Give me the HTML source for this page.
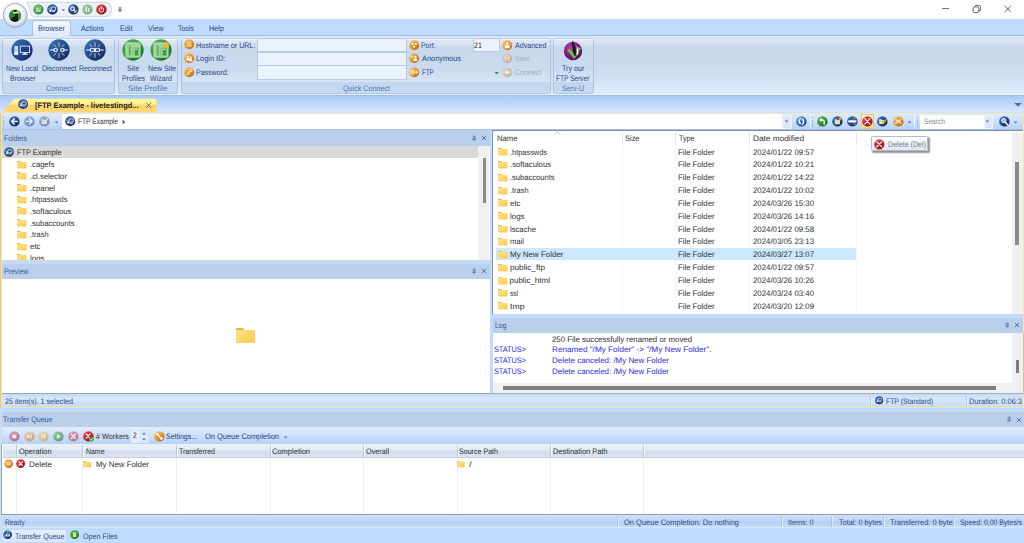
<!DOCTYPE html>
<html><head><meta charset="utf-8"><title>FTP Example</title>
<style>
html,body{margin:0;padding:0;}
body{width:1024px;height:543px;position:relative;overflow:hidden;background:#bfdbff;font-family:"Liberation Sans",sans-serif;}
.t{position:absolute;white-space:nowrap;line-height:12px;height:12px;transform-origin:0 50%;text-rendering:geometricPrecision;}
svg{position:absolute;overflow:visible;}
</style></head><body>
<svg width="0" height="0" style="left:0;top:0"><defs>
<linearGradient id="gB" x1="0.15" y1="0.1" x2="0.85" y2="0.9"><stop offset="0" stop-color="#3470b8"/><stop offset="0.5" stop-color="#214b95"/><stop offset="1" stop-color="#182a68"/></linearGradient>
<linearGradient id="gL" x1="0.15" y1="0.1" x2="0.85" y2="0.9"><stop offset="0" stop-color="#5ba6dc"/><stop offset="0.5" stop-color="#2f6cb8"/><stop offset="1" stop-color="#1d3f8a"/></linearGradient>
<linearGradient id="gG" x1="0.15" y1="0.1" x2="0.85" y2="0.9"><stop offset="0" stop-color="#4fb548"/><stop offset="0.5" stop-color="#2f9633"/><stop offset="1" stop-color="#1a6f25"/></linearGradient>
<linearGradient id="gO" x1="0.15" y1="0.1" x2="0.85" y2="0.9"><stop offset="0" stop-color="#f6bd62"/><stop offset="0.5" stop-color="#e3952c"/><stop offset="1" stop-color="#bd6e16"/></linearGradient>
<linearGradient id="gY" x1="0.15" y1="0.1" x2="0.85" y2="0.9"><stop offset="0" stop-color="#f6d56a"/><stop offset="0.5" stop-color="#e6b236"/><stop offset="1" stop-color="#c08a1a"/></linearGradient>
<linearGradient id="gR" x1="0.15" y1="0.1" x2="0.85" y2="0.9"><stop offset="0" stop-color="#e04a52"/><stop offset="0.5" stop-color="#c2242e"/><stop offset="1" stop-color="#94121c"/></linearGradient>
<radialGradient id="gP" cx="0.4" cy="0.3" r="0.8"><stop offset="0" stop-color="#b23aa8"/><stop offset="0.6" stop-color="#7c1a7c"/><stop offset="1" stop-color="#3d0f45"/></radialGradient>
<radialGradient id="gS" cx="0.45" cy="0.4" r="0.62"><stop offset="0" stop-color="#ffffff"/><stop offset="0.55" stop-color="#f4f6f9"/><stop offset="0.8" stop-color="#dbe1ea"/><stop offset="1" stop-color="#b6c0d2"/></radialGradient>
<linearGradient id="gF" x1="0" y1="0" x2="1" y2="1"><stop offset="0" stop-color="#fde28a"/><stop offset="1" stop-color="#f8c94f"/></linearGradient>
</defs></svg>
<div style="position:absolute;left:0px;top:0px;width:1024px;height:19px;background:#fff;"></div>
<div style="position:absolute;left:0px;top:35px;width:1024px;height:1px;background:#9fc0ea;"></div>
<div style="position:absolute;left:0px;top:36px;width:1024px;height:59px;background:linear-gradient(#dee8f5 0,#d6e2f2 12%,#c9d9ed 16%,#c8d9ee 45%,#d3e3f4 78%,#dff0fb 100%);"></div>
<div style="position:absolute;left:32px;top:20.2px;width:39px;height:15.8px;background:linear-gradient(#f3f8fe,#dfe9f6);border:1px solid #a5c1e6;border-bottom:none;border-radius:3px 3px 0 0;box-sizing:border-box;"></div>
<span class="t" style="left:38.00px;top:23.10px;font-size:8.0px;color:#1e4588;transform:scaleX(0.9202);">Browser</span>
<span class="t" style="left:81.00px;top:23.10px;font-size:8.0px;color:#1e4588;transform:scaleX(0.8767);">Actions</span>
<span class="t" style="left:120.00px;top:23.10px;font-size:8.0px;color:#1e4588;transform:scaleX(0.9068);">Edit</span>
<span class="t" style="left:147.50px;top:23.10px;font-size:8.0px;color:#1e4588;transform:scaleX(0.9014);">View</span>
<span class="t" style="left:178.00px;top:23.10px;font-size:8.0px;color:#1e4588;transform:scaleX(0.8567);">Tools</span>
<span class="t" style="left:209.00px;top:23.10px;font-size:8.0px;color:#1e4588;transform:scaleX(0.9117);">Help</span>
<svg style="left:0;top:0" width="130" height="30" viewBox="0 0 130 30"><path d="M27 2.3H104Q111.5 2.3 111.5 9.6Q111.5 16.8 104 16.8H33.5Q30.8 16.8 30 12Q29 4 26.5 2.3Z" fill="#eef2f8" stroke="#c3cbd8" stroke-width="0.8"/><circle cx="15.2" cy="15.3" r="12" fill="url(#gS)" stroke="#9eaac0" stroke-width="1"/><circle cx="15" cy="15.7" r="6.1" fill="#1f8a35"/><path d="M15 15.7L10.2 19.6A6.1 6.1 0 0 0 18.4 20.8V12.5H15Z" fill="#161616"/><path d="M18.4 12.4V21A6.1 6.1 0 0 0 20.6 13.2Z" fill="#2fa548"/><path d="M12.8 12.2L14.6 11L18.6 11.6L19 13.6H13.4Z" fill="#f3e48c"/><path d="M14 9.9L16.6 10.6V12H14Z" fill="#161616"/><path d="M118.6 7.4H121.4M118.6 8.6H121.4" stroke="#5a78b0" stroke-width="0.7"/><path d="M117.8 9.6H122.2L120 12Z" fill="#3f5f9c"/><path d="M61.4 9.2H65.2L63.3 11.2Z" fill="#5a78b0"/></svg>
<svg style="left:33.40px;top:4.40px" width="10.80" height="10.80" viewBox="-6 -6 12 12" opacity="0.85"><circle r="5.8" fill="url(#gG)"/><rect x="-2.6" y="-3" width="5.2" height="6" rx="0.6" fill="#a9dba6"/><text x="-1.5" y="2.1" font-size="5.4" font-weight="bold" fill="#2a9a30" font-family="Liberation Sans,sans-serif">?</text></svg>
<svg style="left:47.30px;top:4.40px" width="10.80" height="10.80" viewBox="-6 -6 12 12"><circle r="5.8" fill="url(#gB)"/><path d="M-4.8 -0.6H-1.2" stroke="#f4b12c" stroke-width="0.8"/><rect x="-1.4" y="-2.6" width="5" height="3.6" rx="0.4" fill="none" stroke="#fff" stroke-width="0.9"/><path d="M-0.2 2.4H2.6" fill="none" stroke="#fff" stroke-linecap="round" stroke-width="0.9"/><rect x="-3.4" y="0.4" width="2" height="2.2" fill="#fff"/></svg>
<svg style="left:67.90px;top:4.40px" width="10.80" height="10.80" viewBox="-6 -6 12 12"><circle r="5.8" fill="url(#gB)"/><circle cx="-1" cy="-0.8" r="2" fill="none" stroke="#fff" stroke-width="1.2"/><path d="M0.4 0.6L2.4 2.6" fill="none" stroke="#fff" stroke-linecap="round" stroke-width="1.2"/><path d="M0.6 2.6L2 4L4.6 0.6" fill="none" stroke="#f4b12c" stroke-width="1.1"/></svg>
<svg style="left:81.80px;top:4.40px" width="10.80" height="10.80" viewBox="-6 -6 12 12" opacity="0.55"><circle r="5.8" fill="url(#gG)"/><rect x="-2" y="-3" width="1.6" height="6" rx="0.5" fill="#d9f0d6"/><rect x="0.6" y="-1.6" width="1.6" height="4.6" rx="0.5" fill="#d9f0d6"/></svg>
<svg style="left:95.80px;top:4.40px" width="10.80" height="10.80" viewBox="-6 -6 12 12"><circle r="5.8" fill="url(#gR)"/><circle cx="0" cy="0.4" r="2.6" fill="none" stroke="#fff" stroke-width="1"/><path d="M0 -3.4V0" stroke="#c3212c" stroke-width="2"/><path d="M0 -3.4V0" fill="none" stroke="#fff" stroke-linecap="round" stroke-width="0.9"/></svg>
<svg style="left:930px;top:0" width="94" height="19" viewBox="930 0 94 19"><path d="M942 8.6H949" stroke="#444" stroke-width="0.8"/><rect x="973.2" y="6.9" width="5.6" height="5.6" rx="1.2" fill="none" stroke="#444" stroke-width="0.8"/><path d="M975 6.9V6.2Q975 5.4 975.8 5.4H979.4Q980.4 5.4 980.4 6.4V10Q980.4 10.8 979.6 10.8H978.8" fill="none" stroke="#444" stroke-width="0.8"/><path d="M1004.6 5.8L1011 12.2M1011 5.8L1004.6 12.2" stroke="#444" stroke-width="0.8"/></svg>
<div style="position:absolute;left:2px;top:37.5px;width:113px;height:56.0px;box-sizing:border-box;border:1px solid rgba(160,188,226,0.75);border-top-color:rgba(190,208,232,0.6);border-radius:3px;background:linear-gradient(#dfe9f6 0,#d6e2f2 11%,#c9d9ed 15%,#cbdbef 55%,#d5e4f5 79%,#c2d6ef 79.5%,#c7daf2 100%);"></div>
<div style="position:absolute;left:3px;top:38.5px;width:111px;height:0.7999999999999972px;background:rgba(255,255,255,0.5);"></div>
<span class="t" style="left:45.50px;top:82.50px;font-size:8.0px;color:#4f78b4;transform:scaleX(0.9061);">Connect</span>
<div style="position:absolute;left:117.5px;top:37.5px;width:60.5px;height:56.0px;box-sizing:border-box;border:1px solid rgba(160,188,226,0.75);border-top-color:rgba(190,208,232,0.6);border-radius:3px;background:linear-gradient(#dfe9f6 0,#d6e2f2 11%,#c9d9ed 15%,#cbdbef 55%,#d5e4f5 79%,#c2d6ef 79.5%,#c7daf2 100%);"></div>
<div style="position:absolute;left:118.5px;top:38.5px;width:58.5px;height:0.7999999999999972px;background:rgba(255,255,255,0.5);"></div>
<span class="t" style="left:128.00px;top:82.50px;font-size:8.0px;color:#4f78b4;transform:scaleX(1.0211);">Site Profile</span>
<div style="position:absolute;left:180.5px;top:37.5px;width:370.0px;height:56.0px;box-sizing:border-box;border:1px solid rgba(160,188,226,0.75);border-top-color:rgba(190,208,232,0.6);border-radius:3px;background:linear-gradient(#dfe9f6 0,#d6e2f2 11%,#c9d9ed 15%,#cbdbef 55%,#d5e4f5 79%,#c2d6ef 79.5%,#c7daf2 100%);"></div>
<div style="position:absolute;left:181.5px;top:38.5px;width:368.0px;height:0.7999999999999972px;background:rgba(255,255,255,0.5);"></div>
<span class="t" style="left:343.00px;top:82.50px;font-size:8.0px;color:#4f78b4;transform:scaleX(0.8958);">Quick Connect</span>
<div style="position:absolute;left:553px;top:37.5px;width:40.5px;height:56.0px;box-sizing:border-box;border:1px solid rgba(160,188,226,0.75);border-top-color:rgba(190,208,232,0.6);border-radius:3px;background:linear-gradient(#dfe9f6 0,#d6e2f2 11%,#c9d9ed 15%,#cbdbef 55%,#d5e4f5 79%,#c2d6ef 79.5%,#c7daf2 100%);"></div>
<div style="position:absolute;left:554px;top:38.5px;width:38.5px;height:0.7999999999999972px;background:rgba(255,255,255,0.5);"></div>
<span class="t" style="left:562.00px;top:82.50px;font-size:8.0px;color:#4f78b4;transform:scaleX(0.8839);">Serv-U</span>
<svg style="left:10.50px;top:39.00px" width="22.00" height="22.00" viewBox="-6 -6 12 12"><circle r="5.8" fill="url(#gB)"/><rect x="-4.2" y="-2.2" width="2.1" height="4.8" fill="#c9d3e6"/><rect x="-4.2" y="1.2" width="2.1" height="1.4" fill="#fff"/><rect x="-0.9" y="-2.1" width="5" height="3.5" fill="#1c3f86" stroke="#d5dcea" stroke-width="0.55"/><rect x="0.8" y="1.6" width="1.6" height="0.7" fill="#e8ecf4"/><rect x="0.1" y="2.1" width="3" height="0.55" fill="#e8ecf4"/></svg>
<svg style="left:47.50px;top:39.00px" width="22.00" height="22.00" viewBox="-6 -6 12 12"><circle r="5.8" fill="url(#gB)"/><path d="M0 -4.2V-1.6M0 4.2V1.6M-2.9 -3.1L-1.5 -1.5M2.9 -3.1L1.5 -1.5M-2.9 3.1L-1.5 1.5M2.9 3.1L1.5 1.5" stroke="#f4c66b" stroke-width="0.5" fill="none"/><path d="M-4.6 0H-3M4.6 0H3" fill="none" stroke="#fff" stroke-linecap="round" stroke-width="0.5"/><rect x="-3" y="-0.9" width="2.3" height="1.8" rx="0.5" fill="#fff"/><rect x="0.7" y="-0.9" width="2.3" height="1.8" rx="0.5" fill="#fff"/><rect x="-2.3" y="-0.5" width="1" height="1" fill="#1d4b95"/><rect x="1.3" y="-0.5" width="1" height="1" fill="#1d4b95"/></svg>
<svg style="left:84.00px;top:39.00px" width="22.00" height="22.00" viewBox="-6 -6 12 12"><circle r="5.8" fill="url(#gB)"/><path d="M0 -4.2V-1.6M0 4.2V1.6M-2.9 -3.1L-1.5 -1.5M2.9 -3.1L1.5 -1.5M-2.9 3.1L-1.5 1.5M2.9 3.1L1.5 1.5" stroke="#f4c66b" stroke-width="0.5" fill="none"/><path d="M-4.6 0H-3M4.6 0H3" fill="none" stroke="#fff" stroke-linecap="round" stroke-width="0.5"/><rect x="-2.8" y="-0.9" width="5.6" height="1.8" rx="0.5" fill="#fff"/><rect x="-2.2" y="-0.5" width="1.6" height="1" fill="#1d4b95"/><rect x="0.6" y="-0.5" width="1.6" height="1" fill="#1d4b95"/></svg>
<span class="t" style="left:6.00px;top:62.50px;font-size:8.0px;color:#1e4588;transform:scaleX(0.8567);">New Local</span>
<span class="t" style="left:9.50px;top:72.50px;font-size:8.0px;color:#1e4588;transform:scaleX(0.8691);">Browser</span>
<span class="t" style="left:41.50px;top:62.50px;font-size:8.0px;color:#1e4588;transform:scaleX(0.8718);">Disconnect</span>
<span class="t" style="left:79.00px;top:62.50px;font-size:8.0px;color:#1e4588;transform:scaleX(0.8628);">Reconnect</span>
<svg style="left:122.00px;top:39.00px" width="22.00" height="22.00" viewBox="-6 -6 12 12"><circle r="5.8" fill="url(#gG)"/><rect x="-3.9" y="-3.9" width="7.8" height="7.9" rx="0.7" fill="#a3d49f" stroke="#bfe3bb" stroke-width="0.4"/><rect x="-2.3" y="-2.4" width="1.1" height="5.4" fill="#62b25f"/><rect x="-0.5" y="-1.2" width="0.9" height="4.2" fill="#8cc889"/><rect x="1" y="0" width="1.9" height="3" fill="#3f9a40"/><path d="M0.4 -1H3V0" stroke="#5aa858" stroke-width="0.5" fill="none"/></svg>
<svg style="left:150.00px;top:39.00px" width="22.00" height="22.00" viewBox="-6 -6 12 12"><circle r="5.8" fill="url(#gG)"/><rect x="-3.9" y="-3.9" width="7.8" height="7.9" rx="0.7" fill="#a3d49f" stroke="#bfe3bb" stroke-width="0.4"/><rect x="-2.3" y="-2.4" width="1.1" height="5.4" fill="#62b25f"/><rect x="-0.5" y="-1.2" width="0.9" height="4.2" fill="#8cc889"/><rect x="1" y="0" width="1.9" height="3" fill="#3f9a40"/><path d="M0.4 -1H3V0" stroke="#5aa858" stroke-width="0.5" fill="none"/><path d="M2.9 -4.9L3.5 -3.5L5 -3.4L3.9 -2.4L4.2 -0.9L2.9 -1.7L1.6 -0.9L1.9 -2.4L0.8 -3.4L2.3 -3.5Z" fill="#f7b52c"/></svg>
<span class="t" style="left:127.00px;top:62.50px;font-size:8.0px;color:#1e4588;transform:scaleX(0.8705);">Site</span>
<span class="t" style="left:121.50px;top:72.50px;font-size:8.0px;color:#1e4588;transform:scaleX(0.8622);">Profiles</span>
<span class="t" style="left:147.50px;top:62.50px;font-size:8.0px;color:#1e4588;transform:scaleX(0.8747);">New Site</span>
<span class="t" style="left:150.00px;top:72.50px;font-size:8.0px;color:#1e4588;transform:scaleX(0.8839);">Wizard</span>
<svg style="left:183.60px;top:39.30px" width="10.40" height="10.40" viewBox="-6 -6 12 12"><circle r="5.8" fill="url(#gO)"/><rect x="-2.6" y="-3" width="5.2" height="6" rx="0.5" fill="#fbe2b4"/><path d="M-0.9 -3V3M0.9 -3V3M-2.6 -1H2.6M-2.6 1H2.6" stroke="#e3932a" stroke-width="0.5"/></svg>
<svg style="left:183.60px;top:53.20px" width="10.40" height="10.40" viewBox="-6 -6 12 12"><circle r="5.8" fill="url(#gO)"/><circle cx="-1.4" cy="-1.7" r="1.2" fill="#fff"/><path d="M-3.6 2.4Q-3.6 -0.2 -1.4 -0.2Q0.2 -0.2 0.6 1.2V2.4Z" fill="#fff"/><circle cx="1.8" cy="-0.6" r="1.3" fill="#fff"/><path d="M-0.6 3.4Q-0.6 0.9 1.8 0.9Q4 0.9 4 3.4Z" fill="#fff"/></svg>
<svg style="left:183.60px;top:67.20px" width="10.40" height="10.40" viewBox="-6 -6 12 12"><circle r="5.8" fill="url(#gO)"/><path d="M-2.8 3L1 -1" fill="none" stroke="#fff" stroke-linecap="round" stroke-width="1.1"/><circle cx="2" cy="-2" r="1.5" fill="none" stroke="#fff" stroke-width="1"/><path d="M-2 2.2L-1 3.2M-0.9 1.1L0 2" fill="none" stroke="#fff" stroke-linecap="round" stroke-width="0.7"/></svg>
<span class="t" style="left:195.50px;top:39.50px;font-size:8.0px;color:#1e4588;transform:scaleX(0.8982);">Hostname or URL:</span>
<span class="t" style="left:195.50px;top:53.30px;font-size:8.0px;color:#1e4588;transform:scaleX(0.9213);">Login ID:</span>
<span class="t" style="left:195.50px;top:67.10px;font-size:8.0px;color:#1e4588;transform:scaleX(0.8702);">Password:</span>
<div style="position:absolute;left:257.3px;top:38px;width:149.7px;height:14.399999999999999px;box-sizing:border-box;background:#eaf2fb;border:1px solid #b6cae6;"></div>
<div style="position:absolute;left:257.3px;top:51.7px;width:149.7px;height:14.400000000000006px;box-sizing:border-box;background:#eaf2fb;border:1px solid #b6cae6;"></div>
<div style="position:absolute;left:257.3px;top:65.4px;width:149.7px;height:14.400000000000006px;box-sizing:border-box;background:#eaf2fb;border:1px solid #b6cae6;"></div>
<svg style="left:408.50px;top:39.50px" width="10.40" height="10.40" viewBox="-6 -6 12 12"><circle r="5.8" fill="url(#gO)"/><rect x="-3" y="-2.6" width="2.2" height="2.2" rx="0.4" fill="#fff"/><rect x="0.8" y="-2.6" width="2.2" height="2.2" rx="0.4" fill="#fff"/><rect x="-1.1" y="0.6" width="2.2" height="2.2" rx="0.4" fill="#fff"/></svg>
<svg style="left:408.50px;top:53.30px" width="10.40" height="10.40" viewBox="-6 -6 12 12"><circle r="5.8" fill="url(#gO)"/><text x="-4.2" y="0.6" font-size="4.6" font-weight="bold" fill="#fff" font-family="Liberation Sans,sans-serif">?</text><circle cx="1.3" cy="-1.2" r="1.4" fill="#fff"/><path d="M-1.2 3.2Q-1.2 0.4 1.3 0.4Q3.8 0.4 3.8 3.2Z" fill="#fff"/></svg>
<svg style="left:408.50px;top:67.20px" width="10.40" height="10.40" viewBox="-6 -6 12 12"><circle r="5.8" fill="url(#gO)"/><rect x="-4" y="-2.2" width="4" height="4.4" rx="0.5" fill="none" stroke="#fff" stroke-width="0.9"/><rect x="-2.8" y="-1" width="1.6" height="2" fill="#fff"/><path d="M1 0H4M2.6 -1.6L4.2 0L2.6 1.6" fill="none" stroke="#fff" stroke-linecap="round" stroke-width="1"/></svg>
<span class="t" style="left:420.50px;top:39.50px;font-size:8.0px;color:#1e4588;transform:scaleX(0.8583);">Port:</span>
<span class="t" style="left:421.50px;top:53.30px;font-size:8.0px;color:#1e4588;transform:scaleX(0.9232);">Anonymous</span>
<span class="t" style="left:421.50px;top:67.10px;font-size:8.0px;color:#1e4588;transform:scaleX(0.7611);">FTP</span>
<div style="position:absolute;left:472.5px;top:38px;width:27.5px;height:13.799999999999997px;box-sizing:border-box;background:#eaf2fb;border:1px solid #b6cae6;"></div>
<span class="t" style="left:474.20px;top:39.70px;font-size:8.0px;color:#2e2e2e;transform:scaleX(0.8766);">21</span>
<svg style="left:494px;top:70.6px" width="6" height="5" viewBox="0 0 6 5"><path d="M0.6 1H4.8L2.7 3.4Z" fill="#4a6ea8"/></svg>
<svg style="left:502.40px;top:39.50px" width="10.40" height="10.40" viewBox="-6 -6 12 12"><circle r="5.8" fill="url(#gO)"/><circle cx="0" cy="-1.9" r="1.5" fill="#fff"/><path d="M-3 3.4Q-3 0.2 0 0.2Q3 0.2 3 3.4Z" fill="#fff"/><path d="M-4.4 0H4.4" stroke="#fff" stroke-width="0.7"/></svg>
<svg style="left:502.40px;top:53.30px" width="10.40" height="10.40" viewBox="-6 -6 12 12" opacity="0.4"><circle r="5.8" fill="url(#gO)"/><rect x="-2.8" y="-2.8" width="5.6" height="5.6" rx="0.5" fill="#fff"/><rect x="-1.6" y="-2.8" width="3.2" height="2" fill="#e3932a"/><rect x="-1.8" y="0.4" width="3.6" height="2.4" fill="#e3932a"/></svg>
<svg style="left:502.40px;top:67.20px" width="10.40" height="10.40" viewBox="-6 -6 12 12" opacity="0.4"><circle r="5.8" fill="url(#gO)"/><path d="M-4.6 0H4.6" fill="none" stroke="#fff" stroke-linecap="round" stroke-width="0.8"/><rect x="-2.6" y="-1.4" width="5.2" height="2.8" rx="0.6" fill="#fff"/><path d="M0 -3.8V3.8" stroke="#fff" stroke-width="0.6"/></svg>
<span class="t" style="left:515.00px;top:39.50px;font-size:8.0px;color:#1e4588;transform:scaleX(0.8853);">Advanced</span>
<span class="t" style="left:515.00px;top:53.30px;font-size:8.0px;color:#a3adbc;transform:scaleX(0.8226);">Save</span>
<span class="t" style="left:515.00px;top:67.10px;font-size:8.0px;color:#a3adbc;transform:scaleX(0.8894);">Connect</span>
<svg style="left:563px;top:38.5px" width="20" height="24" viewBox="-10 -12 20 24"><circle cx="0" cy="0" r="9.2" fill="url(#gP)"/><path d="M-4.6 -1.6L1.2 5.6L6.4 -3.6" fill="none" stroke="#6cc04a" stroke-width="3.1" stroke-linejoin="miter"/><path d="M-0.6 -10.6Q3.2 -5 3.4 3.4L1.4 5.4Q0 -1 -1.2 -7.2Z" fill="#1c1a16"/><path d="M3.4 -5.6Q6 -1 5.4 3L3.6 4.6Q4.4 0 3.4 -5.6Z" fill="#fff"/></svg>
<span class="t" style="left:562.00px;top:62.50px;font-size:8.0px;color:#1e4588;transform:scaleX(0.8986);">Try our</span>
<span class="t" style="left:556.00px;top:72.50px;font-size:8.0px;color:#1e4588;transform:scaleX(0.8221);">FTP Server</span>
<div style="position:absolute;left:0px;top:112.5px;width:1024px;height:17.5px;background:linear-gradient(#dfeafb 0,#cfe0f9 45%,#b9d3f6 92%,#9db7dd 100%);"></div>
<div style="position:absolute;left:0px;top:112px;width:1024px;height:296px;box-sizing:border-box;border:1.4px solid #f2e4a0;border-left:2px solid #f2e6a6;border-right:0.9px solid #f3eaa8;border-top-color:#e9ecc8;pointer-events:none;"></div>
<div style="position:absolute;left:0px;top:112px;width:0.9px;height:296px;background:#dccb94;"></div>
<div style="position:absolute;left:0px;top:95px;width:1024px;height:17.5px;background:linear-gradient(#a2bde2 0,#a2bde2 4%,#adccf8 9%,#bfd7fa 50%,#dce9fd 100%);"></div>
<svg style="left:0;top:95px" width="160" height="18" viewBox="0 95 160 18"><defs><linearGradient id="gT" x1="0" y1="0" x2="0" y2="1"><stop offset="0" stop-color="#fffb94"/><stop offset="0.40" stop-color="#fff08a"/><stop offset="0.46" stop-color="#ffd06a"/><stop offset="1" stop-color="#ffd874"/></linearGradient></defs><path d="M2 112.6L13.2 100Q14.2 98.8 16 98.8H154Q156.5 98.8 156.5 101V112.6Z" fill="url(#gT)"/><path d="M146.2 102.7L151.2 107.9M151.2 102.7L146.2 107.9" stroke="#56668a" stroke-width="0.9"/></svg>
<div style="position:absolute;left:156.5px;top:112.2px;width:867.5px;height:1.0px;background:#dfe2c6;"></div>
<svg style="left:17.60px;top:99.40px" width="10.20" height="10.20" viewBox="-6 -6 12 12"><circle r="5.8" fill="url(#gB)"/><path d="M-4.8 -0.6H-1.2" stroke="#f4b12c" stroke-width="0.8"/><rect x="-1.4" y="-2.6" width="5" height="3.6" rx="0.4" fill="none" stroke="#fff" stroke-width="0.9"/><path d="M-0.2 2.4H2.6" fill="none" stroke="#fff" stroke-linecap="round" stroke-width="0.9"/><rect x="-3.4" y="0.4" width="2" height="2.2" fill="#fff"/></svg>
<span class="t" style="left:34.50px;top:99.70px;font-size:8.0px;color:#1a1a1a;transform:scaleX(0.9325);font-weight:bold;">[FTP Example - livetestingd...</span>
<svg style="left:1013px;top:102px" width="10" height="6" viewBox="0 0 10 6"><path d="M1.2 1H8.8L5 4.8Z" fill="#4a6ea8"/></svg>
<div style="position:absolute;left:62px;top:113.6px;width:720px;height:15.099999999999994px;background:#fff;"></div>
<div style="position:absolute;left:782px;top:114.5px;width:9.5px;height:14.5px;box-sizing:border-box;background:#dbe8fa;border:1px solid #eef4fd;"></div>
<svg style="left:9.10px;top:116.10px" width="10.80" height="10.80" viewBox="-6 -6 12 12"><circle r="5.8" fill="url(#gB)"/><path d="M3.4 0H-2.6M-0.2 -2.8L-3 0L-0.2 2.8" fill="none" stroke="#fff" stroke-linecap="round" stroke-width="1.6" stroke-linejoin="round"/></svg>
<svg style="left:23.60px;top:116.10px" width="10.80" height="10.80" viewBox="-6 -6 12 12" opacity="0.45"><circle r="5.8" fill="url(#gB)"/><path d="M-3.4 0H2.6M0.2 -2.8L3 0L0.2 2.8" fill="none" stroke="#fff" stroke-linecap="round" stroke-width="1.6" stroke-linejoin="round"/></svg>
<svg style="left:38.60px;top:116.10px" width="10.80" height="10.80" viewBox="-6 -6 12 12" opacity="0.45"><circle r="5.8" fill="url(#gB)"/><path d="M-3 -2.4H-0.6L0 -1.6H2.8V3.2H-3Z" fill="#e8e0c0"/><path d="M-1 -1.6V3.2" stroke="#d9b85a" stroke-width="0.5"/><path d="M2.9 -4.9L3.5 -3.5L5 -3.4L3.9 -2.4L4.2 -0.9L2.9 -1.7L1.6 -0.9L1.9 -2.4L0.8 -3.4L2.3 -3.5Z" fill="#f7b52c"/></svg>
<svg style="left:53.8px;top:120.5px" width="5" height="3" viewBox="0 0 5 3"><path d="M0.6 0.5H4.4L2.5 2.5Z" fill="#5878b4"/></svg>
<div style="position:absolute;left:2.5px;top:117.0px;width:0.7999999999999998px;height:0.7999999999999972px;background:#7d9cd0;"></div>
<div style="position:absolute;left:2.5px;top:119.7px;width:0.7999999999999998px;height:0.7999999999999972px;background:#7d9cd0;"></div>
<div style="position:absolute;left:2.5px;top:122.4px;width:0.7999999999999998px;height:0.7999999999999972px;background:#7d9cd0;"></div>
<div style="position:absolute;left:2.5px;top:125.1px;width:0.7999999999999998px;height:0.7999999999999972px;background:#7d9cd0;"></div>
<svg style="left:64.80px;top:116.00px" width="10.40" height="10.40" viewBox="-6 -6 12 12"><circle r="5.8" fill="url(#gB)"/><path d="M-4.8 -0.6H-1.2" stroke="#f4b12c" stroke-width="0.8"/><rect x="-1.4" y="-2.6" width="5" height="3.6" rx="0.4" fill="none" stroke="#fff" stroke-width="0.9"/><path d="M-0.2 2.4H2.6" fill="none" stroke="#fff" stroke-linecap="round" stroke-width="0.9"/><rect x="-3.4" y="0.4" width="2" height="2.2" fill="#fff"/></svg>
<span class="t" style="left:77.50px;top:116.10px;font-size:8.0px;color:#2e2e2e;transform:scaleX(0.8279);">FTP Example</span>
<svg style="left:121.5px;top:119px" width="4" height="6" viewBox="0 0 4 6"><path d="M0.6 0.6L3.2 3L0.6 5.4Z" fill="#3d5c9c"/></svg>
<svg style="left:784.2px;top:120.0px" width="5" height="3" viewBox="0 0 5 3"><path d="M0.6 0.5H4.4L2.5 2.5Z" fill="#5878b4"/></svg>
<svg style="left:796.40px;top:116.10px" width="10.80" height="10.80" viewBox="-6 -6 12 12"><circle r="5.8" fill="url(#gL)"/><path d="M-0.8 -3.4Q-3.4 -1.4 -1.8 2.2" fill="none" stroke="#fff" stroke-linecap="round" stroke-width="1.5"/><path d="M-3.2 1L-1.5 3.4L-0.2 1.2Z" fill="#fff"/><path d="M0.8 3.4Q3.4 1.4 1.8 -2.2" fill="none" stroke="#fff" stroke-linecap="round" stroke-width="1.5"/><path d="M3.2 -1L1.5 -3.4L0.2 -1.2Z" fill="#fff"/></svg>
<div style="position:absolute;left:809.5px;top:114px;width:1.0px;height:15px;background:rgba(255,255,255,0.55);"></div>
<div style="position:absolute;left:812.3px;top:117.0px;width:0.7999999999999545px;height:0.7999999999999972px;background:#7d9cd0;"></div>
<div style="position:absolute;left:812.3px;top:119.7px;width:0.7999999999999545px;height:0.7999999999999972px;background:#7d9cd0;"></div>
<div style="position:absolute;left:812.3px;top:122.4px;width:0.7999999999999545px;height:0.7999999999999972px;background:#7d9cd0;"></div>
<div style="position:absolute;left:812.3px;top:125.1px;width:0.7999999999999545px;height:0.7999999999999972px;background:#7d9cd0;"></div>
<svg style="left:817.20px;top:116.10px" width="10.80" height="10.80" viewBox="-6 -6 12 12"><circle r="5.8" fill="url(#gG)"/><path d="M2 3.2V0.2Q2 -1.6 0 -1.6H-1.4" fill="none" stroke="#fff" stroke-linecap="round" stroke-width="1.6"/><path d="M-0.8 -4L-3.6 -1.6L-0.8 0.8Z" fill="#fff"/></svg>
<svg style="left:832.20px;top:116.10px" width="10.80" height="10.80" viewBox="-6 -6 12 12"><circle r="5.8" fill="url(#gB)"/><path d="M-3 -2.4H-0.6L0 -1.6H2.8V3.2H-3Z" fill="#f6e3a4"/><path d="M-1 -1.6V3.2" stroke="#d9b85a" stroke-width="0.5"/><path d="M2.9 -4.9L3.5 -3.5L5 -3.4L3.9 -2.4L4.2 -0.9L2.9 -1.7L1.6 -0.9L1.9 -2.4L0.8 -3.4L2.3 -3.5Z" fill="#f7b52c"/></svg>
<svg style="left:846.90px;top:116.10px" width="10.80" height="10.80" viewBox="-6 -6 12 12"><circle r="5.8" fill="url(#gB)"/><rect x="-4.6" y="-1.3" width="9.2" height="2.6" rx="0.5" fill="#fff"/><path d="M0.6 -3.6Q1.8 -3.6 2.2 -2.8Q2.6 -3.6 3.8 -3.6M0.6 3.6Q1.8 3.6 2.2 2.8Q2.6 3.6 3.8 3.6M2.2 -2.8V2.8" stroke="#f2c94c" stroke-width="0.7" fill="none"/></svg>
<div style="position:absolute;left:860.7px;top:114.3px;width:13.599999999999909px;height:14.399999999999991px;box-sizing:border-box;background:linear-gradient(#fff1c0,#ffdc7e);border:0.8px solid #d9c88e;"></div>
<svg style="left:862.10px;top:116.20px" width="10.80" height="10.80" viewBox="-6 -6 12 12"><circle r="5.8" fill="url(#gR)"/><path d="M-2.9 -3L2.9 3M2.9 -3L-2.9 3" fill="none" stroke="#fff" stroke-linecap="round" stroke-width="1.15"/></svg>
<svg style="left:877.10px;top:116.10px" width="10.80" height="10.80" viewBox="-6 -6 12 12"><circle r="5.8" fill="url(#gB)"/><path d="M-3.6 -2.4H-1.2L-0.6 -1.6H1.6V3H-3.6Z" fill="#f6e3a4"/><path d="M-0.2 0.4L1.2 2L4 -2" fill="none" stroke="#f4b12c" stroke-width="1.3" stroke-linecap="round"/></svg>
<svg style="left:893.30px;top:116.30px" width="10.80" height="10.80" viewBox="-6 -6 12 12"><circle r="5.8" fill="url(#gO)"/><path d="M-3.4 -2.4L3.4 2.4M3.4 -2.4L-3.4 2.4" fill="none" stroke="#fff" stroke-linecap="round" stroke-width="1"/><rect x="-2.2" y="-1.3" width="4.4" height="2.6" rx="0.6" fill="#fbe2b4"/></svg>
<svg style="left:907.0px;top:120.5px" width="5" height="3" viewBox="0 0 5 3"><path d="M0.6 0.5H4.4L2.5 2.5Z" fill="#5878b4"/></svg>
<div style="position:absolute;left:914px;top:114px;width:1px;height:15px;background:rgba(255,255,255,0.55);"></div>
<div style="position:absolute;left:916.5px;top:117.0px;width:0.7999999999999545px;height:0.7999999999999972px;background:#7d9cd0;"></div>
<div style="position:absolute;left:916.5px;top:119.7px;width:0.7999999999999545px;height:0.7999999999999972px;background:#7d9cd0;"></div>
<div style="position:absolute;left:916.5px;top:122.4px;width:0.7999999999999545px;height:0.7999999999999972px;background:#7d9cd0;"></div>
<div style="position:absolute;left:916.5px;top:125.1px;width:0.7999999999999545px;height:0.7999999999999972px;background:#7d9cd0;"></div>
<div style="position:absolute;left:920px;top:115px;width:63.5px;height:13.5px;background:#fff;"></div>
<div style="position:absolute;left:983.5px;top:115px;width:9.0px;height:13.5px;box-sizing:border-box;background:#dbe8fa;border:1px solid #eef4fd;"></div>
<span class="t" style="left:923.50px;top:116.10px;font-size:8.0px;color:#8a8a8a;transform:scaleX(0.8285);">Search</span>
<svg style="left:985.3px;top:120.0px" width="5" height="3" viewBox="0 0 5 3"><path d="M0.6 0.5H4.4L2.5 2.5Z" fill="#5878b4"/></svg>
<svg style="left:998.60px;top:116.10px" width="10.80" height="10.80" viewBox="-6 -6 12 12"><circle r="5.8" fill="url(#gB)"/><circle cx="-0.8" cy="-1" r="2.3" fill="#7fc4e8" stroke="#fff" stroke-width="1"/><path d="M1 1L3.6 3.8" fill="none" stroke="#fff" stroke-linecap="round" stroke-width="1.5"/></svg>
<svg style="left:1013.0px;top:120.5px" width="5" height="3" viewBox="0 0 5 3"><path d="M0.6 0.5H4.4L2.5 2.5Z" fill="#5878b4"/></svg>
<div style="position:absolute;left:2px;top:130px;width:487.5px;height:15.699999999999989px;background:#b9cfea;"></div>
<span class="t" style="left:4.00px;top:132.55px;font-size:8.0px;color:#2f5aa0;transform:scaleX(0.8622);">Folders</span>
<svg style="left:471px;top:134.65px" width="6" height="7" viewBox="-3 -3.5 6 7"><path d="M-0.9 -2.5H1.1V0.8H-0.9ZM-1.8 0.9H2M0.1 1V3" fill="none" stroke="#4a70b0" stroke-width="0.55"/><path d="M0.7 -2.5V0.8" stroke="#4a70b0" stroke-width="0.7"/></svg>
<svg style="left:481.3px;top:135.15px" width="6" height="6" viewBox="-3 -3 6 6"><path d="M-2.2 -2.2L2.2 2.2M2.2 -2.2L-2.2 2.2" stroke="#3d66a8" stroke-width="0.8"/></svg>
<div style="position:absolute;left:2px;top:145.7px;width:487.5px;height:115.0px;background:#fff;border-bottom:1px solid #d9d9d9;box-sizing:border-box;overflow:hidden;"></div>
<div style="position:absolute;left:2px;top:146px;width:476.3px;height:11.599999999999994px;background:#d9d9d9;"></div>
<div style="position:absolute;left:478.3px;top:146px;width:11.199999999999989px;height:114.19999999999999px;background:#f0f0f0;"></div>
<div style="position:absolute;left:482.6px;top:157.6px;width:3.1999999999999886px;height:45.400000000000006px;background:#8b8b8b;"></div>
<svg style="left:4.00px;top:147.00px" width="10.00" height="10.00" viewBox="-6 -6 12 12"><circle r="5.8" fill="url(#gB)"/><path d="M-4.8 -0.6H-1.2" stroke="#f4b12c" stroke-width="0.8"/><rect x="-1.4" y="-2.6" width="5" height="3.6" rx="0.4" fill="none" stroke="#fff" stroke-width="0.9"/><path d="M-0.2 2.4H2.6" fill="none" stroke="#fff" stroke-linecap="round" stroke-width="0.9"/><rect x="-3.4" y="0.4" width="2" height="2.2" fill="#fff"/></svg>
<span class="t" style="left:17.00px;top:147.10px;font-size:8.0px;color:#2e2e2e;transform:scaleX(0.9211);">FTP Example</span>
<svg style="left:16.50px;top:160.60px" width="9.50" height="7.60" viewBox="0 0 20 16" preserveAspectRatio="none"><path d="M0 1.2Q0 0 1.2 0H7L9 2.4H0Z" fill="#f2b52c"/><path d="M0 2.2H19Q20 2.2 20 3.2V15Q20 16 19 16H1Q0 16 0 15Z" fill="url(#gF)"/></svg>
<span class="t" style="left:29.50px;top:159.10px;font-size:8.0px;color:#2e2e2e;transform:scaleX(0.9499);">.cagefs</span>
<svg style="left:16.50px;top:172.32px" width="9.50" height="7.60" viewBox="0 0 20 16" preserveAspectRatio="none"><path d="M0 1.2Q0 0 1.2 0H7L9 2.4H0Z" fill="#f2b52c"/><path d="M0 2.2H19Q20 2.2 20 3.2V15Q20 16 19 16H1Q0 16 0 15Z" fill="url(#gF)"/></svg>
<span class="t" style="left:29.50px;top:170.82px;font-size:8.0px;color:#2e2e2e;transform:scaleX(0.9677);">.cl.selector</span>
<svg style="left:16.50px;top:184.04px" width="9.50" height="7.60" viewBox="0 0 20 16" preserveAspectRatio="none"><path d="M0 1.2Q0 0 1.2 0H7L9 2.4H0Z" fill="#f2b52c"/><path d="M0 2.2H19Q20 2.2 20 3.2V15Q20 16 19 16H1Q0 16 0 15Z" fill="url(#gF)"/></svg>
<span class="t" style="left:29.50px;top:182.54px;font-size:8.0px;color:#2e2e2e;transform:scaleX(0.9691);">.cpanel</span>
<svg style="left:16.50px;top:195.76px" width="9.50" height="7.60" viewBox="0 0 20 16" preserveAspectRatio="none"><path d="M0 1.2Q0 0 1.2 0H7L9 2.4H0Z" fill="#f2b52c"/><path d="M0 2.2H19Q20 2.2 20 3.2V15Q20 16 19 16H1Q0 16 0 15Z" fill="url(#gF)"/></svg>
<span class="t" style="left:29.50px;top:194.26px;font-size:8.0px;color:#2e2e2e;transform:scaleX(0.9370);">.htpasswds</span>
<svg style="left:16.50px;top:207.48px" width="9.50" height="7.60" viewBox="0 0 20 16" preserveAspectRatio="none"><path d="M0 1.2Q0 0 1.2 0H7L9 2.4H0Z" fill="#f2b52c"/><path d="M0 2.2H19Q20 2.2 20 3.2V15Q20 16 19 16H1Q0 16 0 15Z" fill="url(#gF)"/></svg>
<span class="t" style="left:29.50px;top:205.98px;font-size:8.0px;color:#2e2e2e;transform:scaleX(0.9721);">.softaculous</span>
<svg style="left:16.50px;top:219.20px" width="9.50" height="7.60" viewBox="0 0 20 16" preserveAspectRatio="none"><path d="M0 1.2Q0 0 1.2 0H7L9 2.4H0Z" fill="#f2b52c"/><path d="M0 2.2H19Q20 2.2 20 3.2V15Q20 16 19 16H1Q0 16 0 15Z" fill="url(#gF)"/></svg>
<span class="t" style="left:29.50px;top:217.70px;font-size:8.0px;color:#2e2e2e;transform:scaleX(0.9440);">.subaccounts</span>
<svg style="left:16.50px;top:230.92px" width="9.50" height="7.60" viewBox="0 0 20 16" preserveAspectRatio="none"><path d="M0 1.2Q0 0 1.2 0H7L9 2.4H0Z" fill="#f2b52c"/><path d="M0 2.2H19Q20 2.2 20 3.2V15Q20 16 19 16H1Q0 16 0 15Z" fill="url(#gF)"/></svg>
<span class="t" style="left:29.50px;top:229.42px;font-size:8.0px;color:#2e2e2e;transform:scaleX(0.9246);">.trash</span>
<svg style="left:16.50px;top:242.64px" width="9.50" height="7.60" viewBox="0 0 20 16" preserveAspectRatio="none"><path d="M0 1.2Q0 0 1.2 0H7L9 2.4H0Z" fill="#f2b52c"/><path d="M0 2.2H19Q20 2.2 20 3.2V15Q20 16 19 16H1Q0 16 0 15Z" fill="url(#gF)"/></svg>
<span class="t" style="left:29.50px;top:241.14px;font-size:8.0px;color:#2e2e2e;transform:scaleX(0.9839);">etc</span>
<div style="position:absolute;left:2px;top:253.16000000000003px;width:476px;height:7.04px;overflow:hidden;">

<svg style="left:14.50px;top:1.20px" width="9.50" height="7.60" viewBox="0 0 20 16" preserveAspectRatio="none"><path d="M0 1.2Q0 0 1.2 0H7L9 2.4H0Z" fill="#f2b52c"/><path d="M0 2.2H19Q20 2.2 20 3.2V15Q20 16 19 16H1Q0 16 0 15Z" fill="url(#gF)"/></svg>
<span class="t" style="left:27.50px;top:-0.30px;font-size:8.0px;color:#2e2e2e;transform:scaleX(0.9880);">logs</span>
</div>
<div style="position:absolute;left:2px;top:263.5px;width:487.5px;height:15.100000000000023px;background:#b9cfea;"></div>
<span class="t" style="left:4.00px;top:265.75px;font-size:8.0px;color:#2f5aa0;transform:scaleX(0.8611);">Preview</span>
<svg style="left:471px;top:267.85px" width="6" height="7" viewBox="-3 -3.5 6 7"><path d="M-0.9 -2.5H1.1V0.8H-0.9ZM-1.8 0.9H2M0.1 1V3" fill="none" stroke="#4a70b0" stroke-width="0.55"/><path d="M0.7 -2.5V0.8" stroke="#4a70b0" stroke-width="0.7"/></svg>
<svg style="left:481.3px;top:268.35px" width="6" height="6" viewBox="-3 -3 6 6"><path d="M-2.2 -2.2L2.2 2.2M2.2 -2.2L-2.2 2.2" stroke="#3d66a8" stroke-width="0.8"/></svg>
<div style="position:absolute;left:2px;top:278.6px;width:487.5px;height:114.59999999999997px;background:#fff;"></div>
<div style="position:absolute;left:2px;top:393.2px;width:487.5px;height:1.1000000000000227px;background:#9aa7b8;"></div>
<svg style="left:236.00px;top:328.00px" width="19.00" height="15.00" viewBox="0 0 20 16" preserveAspectRatio="none"><path d="M0 1.2Q0 0 1.2 0H7L9 2.4H0Z" fill="#f2b52c"/><path d="M0 2.2H19Q20 2.2 20 3.2V15Q20 16 19 16H1Q0 16 0 15Z" fill="url(#gF)"/></svg>
<div style="position:absolute;left:2px;top:394.3px;width:1021.1px;height:12.699999999999989px;background:linear-gradient(#c3d9f6,#d7e6fb 35%,#c9ddf8);"></div>
<span class="t" style="left:5.00px;top:396.40px;font-size:8.0px;color:#2a4a82;transform:scaleX(0.8895);">25 item(s). 1 selected.</span>
<div style="position:absolute;left:489.5px;top:393.2px;width:533.6px;height:1.1000000000000227px;background:#a3b0c2;"></div>
<div style="position:absolute;left:870px;top:395.5px;width:1px;height:11.0px;background:#b4cbea;"></div>
<div style="position:absolute;left:871px;top:395.5px;width:1px;height:11.0px;background:#e4eefb;"></div>
<div style="position:absolute;left:966px;top:395.5px;width:1px;height:11.0px;background:#b4cbea;"></div>
<div style="position:absolute;left:967px;top:395.5px;width:1px;height:11.0px;background:#e4eefb;"></div>
<svg style="left:874.80px;top:396.40px" width="8.40" height="8.40" viewBox="-6 -6 12 12"><circle r="5.8" fill="url(#gB)"/><path d="M-4.8 -0.6H-1.2" stroke="#f4b12c" stroke-width="0.8"/><rect x="-1.4" y="-2.6" width="5" height="3.6" rx="0.4" fill="none" stroke="#fff" stroke-width="0.9"/><path d="M-0.2 2.4H2.6" fill="none" stroke="#fff" stroke-linecap="round" stroke-width="0.9"/><rect x="-3.4" y="0.4" width="2" height="2.2" fill="#fff"/></svg>
<span class="t" style="left:886.00px;top:396.10px;font-size:8.0px;color:#2a4a82;transform:scaleX(0.8548);">FTP (Standard)</span>
<span class="t" style="left:969.00px;top:396.10px;font-size:8.0px;color:#2a4a82;transform:scaleX(0.9310);">Duration: 0:06:3</span>
<div style="position:absolute;left:492px;top:129.8px;width:531.1px;height:184.8px;background:#fff;border-left:1px solid #7f93ad;border-top:1px solid #788eac;border-bottom:1px solid #cfd8e4;box-sizing:border-box;"></div>
<div style="position:absolute;left:621.5px;top:131.5px;width:1.0px;height:13.5px;background:#e3e7ee;"></div>
<div style="position:absolute;left:621.5px;top:145px;width:1.0px;height:169px;background:#f3f5f9;"></div>
<div style="position:absolute;left:674.5px;top:131.5px;width:1.0px;height:13.5px;background:#e3e7ee;"></div>
<div style="position:absolute;left:674.5px;top:145px;width:1.0px;height:169px;background:#f3f5f9;"></div>
<div style="position:absolute;left:749px;top:131.5px;width:1px;height:13.5px;background:#e3e7ee;"></div>
<div style="position:absolute;left:749px;top:145px;width:1px;height:169px;background:#f3f5f9;"></div>
<div style="position:absolute;left:855.5px;top:131.5px;width:1.0px;height:13.5px;background:#e3e7ee;"></div>
<div style="position:absolute;left:855.5px;top:145px;width:1.0px;height:169px;background:#f3f5f9;"></div>
<svg style="left:554px;top:131px" width="7" height="4" viewBox="0 0 7 4"><path d="M0.8 3.2L3.5 0.8L6.2 3.2" fill="none" stroke="#999" stroke-width="0.6"/></svg>
<span class="t" style="left:497.00px;top:133.00px;font-size:8.0px;color:#2e2e2e;transform:scaleX(0.9606);">Name</span>
<span class="t" style="left:624.50px;top:133.00px;font-size:8.0px;color:#2e2e2e;transform:scaleX(0.9317);">Size</span>
<span class="t" style="left:678.50px;top:133.00px;font-size:8.0px;color:#2e2e2e;transform:scaleX(0.8937);">Type</span>
<span class="t" style="left:753.00px;top:133.00px;font-size:8.0px;color:#2e2e2e;transform:scaleX(1.0332);">Date modified</span>
<svg style="left:498.00px;top:148.10px" width="9.50" height="7.60" viewBox="0 0 20 16" preserveAspectRatio="none"><path d="M0 1.2Q0 0 1.2 0H7L9 2.4H0Z" fill="#f2b52c"/><path d="M0 2.2H19Q20 2.2 20 3.2V15Q20 16 19 16H1Q0 16 0 15Z" fill="url(#gF)"/></svg>
<span class="t" style="left:509.50px;top:146.60px;font-size:8.0px;color:#2e2e2e;transform:scaleX(0.9245);">.htpasswds</span>
<span class="t" style="left:678.00px;top:146.60px;font-size:8.0px;color:#2e2e2e;transform:scaleX(0.9659);">File Folder</span>
<span class="t" style="left:753.00px;top:146.60px;font-size:8.0px;color:#2e2e2e;transform:scaleX(0.9794);">2024/01/22 09:57</span>
<svg style="left:498.00px;top:160.94px" width="9.50" height="7.60" viewBox="0 0 20 16" preserveAspectRatio="none"><path d="M0 1.2Q0 0 1.2 0H7L9 2.4H0Z" fill="#f2b52c"/><path d="M0 2.2H19Q20 2.2 20 3.2V15Q20 16 19 16H1Q0 16 0 15Z" fill="url(#gF)"/></svg>
<span class="t" style="left:509.50px;top:159.44px;font-size:8.0px;color:#2e2e2e;transform:scaleX(0.9604);">.softaculous</span>
<span class="t" style="left:678.00px;top:159.44px;font-size:8.0px;color:#2e2e2e;transform:scaleX(0.9659);">File Folder</span>
<span class="t" style="left:753.00px;top:159.44px;font-size:8.0px;color:#2e2e2e;transform:scaleX(0.9794);">2024/01/22 10:21</span>
<svg style="left:498.00px;top:173.78px" width="9.50" height="7.60" viewBox="0 0 20 16" preserveAspectRatio="none"><path d="M0 1.2Q0 0 1.2 0H7L9 2.4H0Z" fill="#f2b52c"/><path d="M0 2.2H19Q20 2.2 20 3.2V15Q20 16 19 16H1Q0 16 0 15Z" fill="url(#gF)"/></svg>
<span class="t" style="left:509.50px;top:172.28px;font-size:8.0px;color:#2e2e2e;transform:scaleX(0.9440);">.subaccounts</span>
<span class="t" style="left:678.00px;top:172.28px;font-size:8.0px;color:#2e2e2e;transform:scaleX(0.9659);">File Folder</span>
<span class="t" style="left:753.00px;top:172.28px;font-size:8.0px;color:#2e2e2e;transform:scaleX(0.9794);">2024/01/22 14:22</span>
<svg style="left:498.00px;top:186.62px" width="9.50" height="7.60" viewBox="0 0 20 16" preserveAspectRatio="none"><path d="M0 1.2Q0 0 1.2 0H7L9 2.4H0Z" fill="#f2b52c"/><path d="M0 2.2H19Q20 2.2 20 3.2V15Q20 16 19 16H1Q0 16 0 15Z" fill="url(#gF)"/></svg>
<span class="t" style="left:509.50px;top:185.12px;font-size:8.0px;color:#2e2e2e;transform:scaleX(0.9246);">.trash</span>
<span class="t" style="left:678.00px;top:185.12px;font-size:8.0px;color:#2e2e2e;transform:scaleX(0.9659);">File Folder</span>
<span class="t" style="left:753.00px;top:185.12px;font-size:8.0px;color:#2e2e2e;transform:scaleX(0.9794);">2024/01/22 10:02</span>
<svg style="left:498.00px;top:199.46px" width="9.50" height="7.60" viewBox="0 0 20 16" preserveAspectRatio="none"><path d="M0 1.2Q0 0 1.2 0H7L9 2.4H0Z" fill="#f2b52c"/><path d="M0 2.2H19Q20 2.2 20 3.2V15Q20 16 19 16H1Q0 16 0 15Z" fill="url(#gF)"/></svg>
<span class="t" style="left:509.50px;top:197.96px;font-size:8.0px;color:#2e2e2e;transform:scaleX(0.9839);">etc</span>
<span class="t" style="left:678.00px;top:197.96px;font-size:8.0px;color:#2e2e2e;transform:scaleX(0.9659);">File Folder</span>
<span class="t" style="left:753.00px;top:197.96px;font-size:8.0px;color:#2e2e2e;transform:scaleX(0.9794);">2024/03/26 15:30</span>
<svg style="left:498.00px;top:212.30px" width="9.50" height="7.60" viewBox="0 0 20 16" preserveAspectRatio="none"><path d="M0 1.2Q0 0 1.2 0H7L9 2.4H0Z" fill="#f2b52c"/><path d="M0 2.2H19Q20 2.2 20 3.2V15Q20 16 19 16H1Q0 16 0 15Z" fill="url(#gF)"/></svg>
<span class="t" style="left:509.50px;top:210.80px;font-size:8.0px;color:#2e2e2e;transform:scaleX(0.9880);">logs</span>
<span class="t" style="left:678.00px;top:210.80px;font-size:8.0px;color:#2e2e2e;transform:scaleX(0.9659);">File Folder</span>
<span class="t" style="left:753.00px;top:210.80px;font-size:8.0px;color:#2e2e2e;transform:scaleX(0.9794);">2024/03/26 14:16</span>
<svg style="left:498.00px;top:225.14px" width="9.50" height="7.60" viewBox="0 0 20 16" preserveAspectRatio="none"><path d="M0 1.2Q0 0 1.2 0H7L9 2.4H0Z" fill="#f2b52c"/><path d="M0 2.2H19Q20 2.2 20 3.2V15Q20 16 19 16H1Q0 16 0 15Z" fill="url(#gF)"/></svg>
<span class="t" style="left:509.50px;top:223.64px;font-size:8.0px;color:#2e2e2e;transform:scaleX(0.9585);">lscache</span>
<span class="t" style="left:678.00px;top:223.64px;font-size:8.0px;color:#2e2e2e;transform:scaleX(0.9659);">File Folder</span>
<span class="t" style="left:753.00px;top:223.64px;font-size:8.0px;color:#2e2e2e;transform:scaleX(0.9794);">2024/01/22 09:58</span>
<svg style="left:498.00px;top:237.98px" width="9.50" height="7.60" viewBox="0 0 20 16" preserveAspectRatio="none"><path d="M0 1.2Q0 0 1.2 0H7L9 2.4H0Z" fill="#f2b52c"/><path d="M0 2.2H19Q20 2.2 20 3.2V15Q20 16 19 16H1Q0 16 0 15Z" fill="url(#gF)"/></svg>
<span class="t" style="left:509.50px;top:236.48px;font-size:8.0px;color:#2e2e2e;transform:scaleX(0.9545);">mail</span>
<span class="t" style="left:678.00px;top:236.48px;font-size:8.0px;color:#2e2e2e;transform:scaleX(0.9659);">File Folder</span>
<span class="t" style="left:753.00px;top:236.48px;font-size:8.0px;color:#2e2e2e;transform:scaleX(0.9794);">2024/03/05 23:13</span>
<div style="position:absolute;left:495.5px;top:247.92px;width:360.5px;height:12.200000000000017px;background:#cce8ff;"></div>
<svg style="left:498.00px;top:250.82px" width="9.50" height="7.60" viewBox="0 0 20 16" preserveAspectRatio="none"><path d="M0 1.2Q0 0 1.2 0H7L9 2.4H0Z" fill="#f2b52c"/><path d="M0 2.2H19Q20 2.2 20 3.2V15Q20 16 19 16H1Q0 16 0 15Z" fill="url(#gF)"/></svg>
<span class="t" style="left:509.50px;top:249.32px;font-size:8.0px;color:#2e2e2e;transform:scaleX(0.9946);">My New Folder</span>
<span class="t" style="left:678.00px;top:249.32px;font-size:8.0px;color:#2e2e2e;transform:scaleX(0.9659);">File Folder</span>
<span class="t" style="left:753.00px;top:249.32px;font-size:8.0px;color:#2e2e2e;transform:scaleX(0.9794);">2024/03/27 13:07</span>
<svg style="left:498.00px;top:263.66px" width="9.50" height="7.60" viewBox="0 0 20 16" preserveAspectRatio="none"><path d="M0 1.2Q0 0 1.2 0H7L9 2.4H0Z" fill="#f2b52c"/><path d="M0 2.2H19Q20 2.2 20 3.2V15Q20 16 19 16H1Q0 16 0 15Z" fill="url(#gF)"/></svg>
<span class="t" style="left:509.50px;top:262.16px;font-size:8.0px;color:#2e2e2e;transform:scaleX(1.0220);">public_ftp</span>
<span class="t" style="left:678.00px;top:262.16px;font-size:8.0px;color:#2e2e2e;transform:scaleX(0.9659);">File Folder</span>
<span class="t" style="left:753.00px;top:262.16px;font-size:8.0px;color:#2e2e2e;transform:scaleX(0.9794);">2024/01/22 09:57</span>
<svg style="left:498.00px;top:276.50px" width="9.50" height="7.60" viewBox="0 0 20 16" preserveAspectRatio="none"><path d="M0 1.2Q0 0 1.2 0H7L9 2.4H0Z" fill="#f2b52c"/><path d="M0 2.2H19Q20 2.2 20 3.2V15Q20 16 19 16H1Q0 16 0 15Z" fill="url(#gF)"/></svg>
<span class="t" style="left:509.50px;top:275.00px;font-size:8.0px;color:#2e2e2e;">public_html</span>
<span class="t" style="left:678.00px;top:275.00px;font-size:8.0px;color:#2e2e2e;transform:scaleX(0.9659);">File Folder</span>
<span class="t" style="left:753.00px;top:275.00px;font-size:8.0px;color:#2e2e2e;transform:scaleX(0.9794);">2024/03/26 10:26</span>
<svg style="left:498.00px;top:289.34px" width="9.50" height="7.60" viewBox="0 0 20 16" preserveAspectRatio="none"><path d="M0 1.2Q0 0 1.2 0H7L9 2.4H0Z" fill="#f2b52c"/><path d="M0 2.2H19Q20 2.2 20 3.2V15Q20 16 19 16H1Q0 16 0 15Z" fill="url(#gF)"/></svg>
<span class="t" style="left:509.50px;top:287.84px;font-size:8.0px;color:#2e2e2e;transform:scaleX(0.8182);">ssl</span>
<span class="t" style="left:678.00px;top:287.84px;font-size:8.0px;color:#2e2e2e;transform:scaleX(0.9659);">File Folder</span>
<span class="t" style="left:753.00px;top:287.84px;font-size:8.0px;color:#2e2e2e;transform:scaleX(0.9794);">2024/03/24 03:40</span>
<svg style="left:498.00px;top:302.18px" width="9.50" height="7.60" viewBox="0 0 20 16" preserveAspectRatio="none"><path d="M0 1.2Q0 0 1.2 0H7L9 2.4H0Z" fill="#f2b52c"/><path d="M0 2.2H19Q20 2.2 20 3.2V15Q20 16 19 16H1Q0 16 0 15Z" fill="url(#gF)"/></svg>
<span class="t" style="left:509.50px;top:300.68px;font-size:8.0px;color:#2e2e2e;transform:scaleX(1.0873);">tmp</span>
<span class="t" style="left:678.00px;top:300.68px;font-size:8.0px;color:#2e2e2e;transform:scaleX(0.9659);">File Folder</span>
<span class="t" style="left:753.00px;top:300.68px;font-size:8.0px;color:#2e2e2e;transform:scaleX(0.9794);">2024/03/20 12:09</span>
<div style="position:absolute;left:1012px;top:131.5px;width:11.100000000000023px;height:182.5px;background:#f0f0f0;"></div>
<div style="position:absolute;left:1015.2px;top:162px;width:3.3999999999999773px;height:82.5px;background:#8b8b8b;"></div>
<div style="position:absolute;left:871px;top:136.3px;width:57.39999999999998px;height:14.699999999999989px;box-sizing:border-box;border:0.8px solid #b4bbc8;border-radius:1.5px;background:linear-gradient(#ffffff,#dfe8f5);box-shadow:1.4px 1.4px 1.6px rgba(0,0,0,0.42);"></div>
<svg style="left:874.00px;top:138.70px" width="10.60" height="10.60" viewBox="-6 -6 12 12"><circle r="5.8" fill="url(#gR)"/><path d="M-2.9 -3L2.9 3M2.9 -3L-2.9 3" fill="none" stroke="#fff" stroke-linecap="round" stroke-width="1.15"/></svg>
<span class="t" style="left:888.00px;top:138.70px;font-size:8.0px;color:#6f7b8c;transform:scaleX(0.8903);">Delete (Del)</span>
<div style="position:absolute;left:492.5px;top:317.5px;width:530.6px;height:15.100000000000023px;background:#b9cfea;"></div>
<span class="t" style="left:495.00px;top:319.75px;font-size:8.0px;color:#2f5aa0;transform:scaleX(0.8616);">Log</span>
<svg style="left:1004px;top:321.85px" width="6" height="7" viewBox="-3 -3.5 6 7"><path d="M-0.9 -2.5H1.1V0.8H-0.9ZM-1.8 0.9H2M0.1 1V3" fill="none" stroke="#4a70b0" stroke-width="0.55"/><path d="M0.7 -2.5V0.8" stroke="#4a70b0" stroke-width="0.7"/></svg>
<svg style="left:1014px;top:322.35px" width="6" height="6" viewBox="-3 -3 6 6"><path d="M-2.2 -2.2L2.2 2.2M2.2 -2.2L-2.2 2.2" stroke="#3d66a8" stroke-width="0.8"/></svg>
<div style="position:absolute;left:492.5px;top:332.6px;width:530.6px;height:60.599999999999966px;background:#fff;"></div>
<div style="position:absolute;left:1012px;top:333px;width:11.100000000000023px;height:60.19999999999999px;background:#f0f0f0;"></div>
<div style="position:absolute;left:492.5px;top:382.6px;width:530.6px;height:10.599999999999966px;background:#f0f0f0;"></div>
<div style="position:absolute;left:1016px;top:360px;width:3px;height:12.5px;background:#7d7d7d;"></div>
<div style="position:absolute;left:503px;top:386.3px;width:492.5px;height:3.3999999999999773px;background:#808080;"></div>
<span class="t" style="left:552.00px;top:333.70px;font-size:8.0px;color:#2e2e2e;transform:scaleX(0.9778);">250 File successfully renamed or moved</span>
<span class="t" style="left:493.50px;top:344.30px;font-size:8.0px;color:#2a2ae6;transform:scaleX(0.9132);">STATUS&gt;</span>
<span class="t" style="left:552.00px;top:344.30px;font-size:8.0px;color:#2a2ae6;transform:scaleX(1.0220);">Renamed "/My Folder" -&gt; "/My New Folder".</span>
<span class="t" style="left:493.50px;top:354.90px;font-size:8.0px;color:#2a2ae6;transform:scaleX(0.9132);">STATUS&gt;</span>
<span class="t" style="left:552.00px;top:354.90px;font-size:8.0px;color:#2a2ae6;transform:scaleX(0.9930);">Delete canceled: /My New Folder</span>
<span class="t" style="left:493.50px;top:365.50px;font-size:8.0px;color:#2a2ae6;transform:scaleX(0.9132);">STATUS&gt;</span>
<span class="t" style="left:552.00px;top:365.50px;font-size:8.0px;color:#2a2ae6;transform:scaleX(0.9930);">Delete canceled: /My New Folder</span>
<div style="position:absolute;left:1023.2px;top:333px;width:0.7999999999999545px;height:61px;background:#dcc39a;"></div>
<div style="position:absolute;left:2px;top:412px;width:1022px;height:15px;background:#b9cfea;"></div>
<span class="t" style="left:2.50px;top:414.20px;font-size:8.0px;color:#2f5aa0;transform:scaleX(0.8882);">Transfer Queue</span>
<svg style="left:1006px;top:416.3px" width="6" height="7" viewBox="-3 -3.5 6 7"><path d="M-0.9 -2.5H1.1V0.8H-0.9ZM-1.8 0.9H2M0.1 1V3" fill="none" stroke="#4a70b0" stroke-width="0.55"/><path d="M0.7 -2.5V0.8" stroke="#4a70b0" stroke-width="0.7"/></svg>
<svg style="left:1016px;top:416.8px" width="6" height="6" viewBox="-3 -3 6 6"><path d="M-2.2 -2.2L2.2 2.2M2.2 -2.2L-2.2 2.2" stroke="#3d66a8" stroke-width="0.8"/></svg>
<div style="position:absolute;left:0px;top:412px;width:2px;height:131px;background:#c9ddf8;"></div>
<div style="position:absolute;left:2px;top:427px;width:1022px;height:17px;background:linear-gradient(#e2edfc 0,#d3e3fa 40%,#b6d1f6 100%);"></div>
<svg style="left:8.60px;top:430.60px" width="10.80" height="10.80" viewBox="-6 -6 12 12" opacity="0.45"><circle r="5.8" fill="url(#gR)"/><rect x="-2" y="-2" width="4" height="4" fill="#fff"/></svg>
<svg style="left:23.60px;top:430.60px" width="10.80" height="10.80" viewBox="-6 -6 12 12" opacity="0.5"><circle r="5.8" fill="url(#gO)"/><path d="M-2.6 -2.4L0.6 0L-2.6 2.4Z" fill="#fff"/><rect x="1.2" y="-2.4" width="1.3" height="4.8" fill="#fff"/></svg>
<svg style="left:38.20px;top:430.60px" width="10.80" height="10.80" viewBox="-6 -6 12 12" opacity="0.5"><circle r="5.8" fill="url(#gY)"/><rect x="-2.1" y="-2.4" width="1.5" height="4.8" fill="#fff"/><rect x="0.6" y="-2.4" width="1.5" height="4.8" fill="#fff"/></svg>
<svg style="left:53.20px;top:430.60px" width="10.80" height="10.80" viewBox="-6 -6 12 12" opacity="0.55"><circle r="5.8" fill="url(#gG)"/><path d="M-1.6 -2.8L2.8 0L-1.6 2.8Z" fill="#fff"/></svg>
<svg style="left:68.20px;top:430.60px" width="10.80" height="10.80" viewBox="-6 -6 12 12" opacity="0.45"><circle r="5.8" fill="url(#gR)"/><path d="M-2.3 -2.3L2.3 2.3M2.3 -2.3L-2.3 2.3" fill="none" stroke="#fff" stroke-linecap="round" stroke-width="1.5"/></svg>
<svg style="left:82.90px;top:430.60px" width="10.80" height="10.80" viewBox="-6 -6 12 12"><circle r="5.8" fill="url(#gR)"/><path d="M-2.6 -2.8L1.6 1.8M2 -2.8L-2.4 2" fill="none" stroke="#fff" stroke-linecap="round" stroke-width="1.4"/><circle cx="3.3" cy="3.2" r="2.7" fill="#3aa53a"/><path d="M1.9 3.2L3 4.3L4.8 2.1" fill="none" stroke="#fff" stroke-width="0.85"/></svg>
<span class="t" style="left:96.00px;top:431.10px;font-size:8.0px;color:#2e2e2e;transform:scaleX(0.9090);"># Workers</span>
<div style="position:absolute;left:131px;top:430px;width:17.5px;height:12.600000000000023px;background:#e6edf8;"></div>
<div style="position:absolute;left:140px;top:430px;width:8.5px;height:12.600000000000023px;background:#dbe7f8;"></div>
<span class="t" style="left:132.60px;top:430.10px;font-size:8.0px;color:#2e2e2e;transform:scaleX(0.8091);">2</span>
<svg style="left:141px;top:431px" width="6" height="11" viewBox="0 0 6 11"><path d="M1 3.6L3 1.4L5 3.6Z" fill="#5a7ab2"/><path d="M1 7.4L3 9.6L5 7.4Z" fill="#5a7ab2"/></svg>
<svg style="left:154.10px;top:430.60px" width="10.80" height="10.80" viewBox="-6 -6 12 12"><circle r="5.8" fill="url(#gO)"/><path d="M-2.6 -2.6L2.6 2.6" fill="none" stroke="#fff" stroke-linecap="round" stroke-width="1.4"/><circle cx="-3" cy="-2" r="1" fill="#fff"/><circle cx="-2" cy="-3" r="1" fill="#fff"/><circle cx="3" cy="2" r="1" fill="#fff"/><circle cx="2" cy="3" r="1" fill="#fff"/></svg>
<span class="t" style="left:166.00px;top:431.10px;font-size:8.0px;color:#1e4588;transform:scaleX(0.8714);">Settings...</span>
<span class="t" style="left:205.00px;top:431.10px;font-size:8.0px;color:#1e4588;transform:scaleX(0.9296);">On Queue Completion</span>
<svg style="left:282.5px;top:435.5px" width="5" height="3" viewBox="0 0 5 3"><path d="M0.6 0.5H4.4L2.5 2.5Z" fill="#6a88ba"/></svg>
<div style="position:absolute;left:1.4px;top:444px;width:1022.6px;height:70.60000000000002px;background:#fff;border-left:1px solid #9aa8bc;border-bottom:1px solid #8f9cb0;box-sizing:border-box;"></div>
<div style="position:absolute;left:3px;top:444px;width:1021px;height:13.600000000000023px;background:linear-gradient(#eef2f8 0,#e4eaf4 45%,#d3deee 55%,#dbe4f1 100%);border-bottom:1px solid #c4d0e2;box-sizing:border-box;"></div>
<div style="position:absolute;left:15.5px;top:444.5px;width:1.0px;height:12.5px;background:#b9c7db;"></div>
<div style="position:absolute;left:16.5px;top:444.5px;width:1.0px;height:12.5px;background:#f6f9fc;"></div>
<div style="position:absolute;left:15.5px;top:458px;width:1.0px;height:56px;background:#edf2f9;"></div>
<div style="position:absolute;left:82px;top:444.5px;width:1px;height:12.5px;background:#b9c7db;"></div>
<div style="position:absolute;left:83px;top:444.5px;width:1px;height:12.5px;background:#f6f9fc;"></div>
<div style="position:absolute;left:82px;top:458px;width:1px;height:56px;background:#edf2f9;"></div>
<div style="position:absolute;left:175.5px;top:444.5px;width:1.0px;height:12.5px;background:#b9c7db;"></div>
<div style="position:absolute;left:176.5px;top:444.5px;width:1.0px;height:12.5px;background:#f6f9fc;"></div>
<div style="position:absolute;left:175.5px;top:458px;width:1.0px;height:56px;background:#edf2f9;"></div>
<div style="position:absolute;left:269.5px;top:444.5px;width:1.0px;height:12.5px;background:#b9c7db;"></div>
<div style="position:absolute;left:270.5px;top:444.5px;width:1.0px;height:12.5px;background:#f6f9fc;"></div>
<div style="position:absolute;left:269.5px;top:458px;width:1.0px;height:56px;background:#edf2f9;"></div>
<div style="position:absolute;left:362.5px;top:444.5px;width:1.0px;height:12.5px;background:#b9c7db;"></div>
<div style="position:absolute;left:363.5px;top:444.5px;width:1.0px;height:12.5px;background:#f6f9fc;"></div>
<div style="position:absolute;left:362.5px;top:458px;width:1.0px;height:56px;background:#edf2f9;"></div>
<div style="position:absolute;left:456.5px;top:444.5px;width:1.0px;height:12.5px;background:#b9c7db;"></div>
<div style="position:absolute;left:457.5px;top:444.5px;width:1.0px;height:12.5px;background:#f6f9fc;"></div>
<div style="position:absolute;left:456.5px;top:458px;width:1.0px;height:56px;background:#edf2f9;"></div>
<div style="position:absolute;left:549.5px;top:444.5px;width:1.0px;height:12.5px;background:#b9c7db;"></div>
<div style="position:absolute;left:550.5px;top:444.5px;width:1.0px;height:12.5px;background:#f6f9fc;"></div>
<div style="position:absolute;left:549.5px;top:458px;width:1.0px;height:56px;background:#edf2f9;"></div>
<div style="position:absolute;left:643px;top:444.5px;width:1px;height:12.5px;background:#b9c7db;"></div>
<div style="position:absolute;left:644px;top:444.5px;width:1px;height:12.5px;background:#f6f9fc;"></div>
<div style="position:absolute;left:643px;top:458px;width:1px;height:56px;background:#edf2f9;"></div>
<span class="t" style="left:19.00px;top:445.70px;font-size:8.0px;color:#2e2e2e;transform:scaleX(0.9251);">Operation</span>
<span class="t" style="left:85.50px;top:445.70px;font-size:8.0px;color:#2e2e2e;transform:scaleX(0.8669);">Name</span>
<span class="t" style="left:179.00px;top:445.70px;font-size:8.0px;color:#2e2e2e;transform:scaleX(0.8770);">Transferred</span>
<span class="t" style="left:272.00px;top:445.70px;font-size:8.0px;color:#2e2e2e;transform:scaleX(0.9391);">Completion</span>
<span class="t" style="left:366.00px;top:445.70px;font-size:8.0px;color:#2e2e2e;transform:scaleX(0.9077);">Overall</span>
<span class="t" style="left:459.00px;top:445.70px;font-size:8.0px;color:#2e2e2e;transform:scaleX(0.8858);">Source Path</span>
<span class="t" style="left:552.50px;top:445.70px;font-size:8.0px;color:#2e2e2e;transform:scaleX(0.9284);">Destination Path</span>
<svg style="left:3.90px;top:459.40px" width="9.20" height="9.20" viewBox="-6 -6 12 12"><circle r="5.8" fill="url(#gO)"/><rect x="-3" y="-1.6" width="6" height="3.6" rx="0.5" fill="#fbe2b4"/><path d="M-2 0.2H2" stroke="#e3932a" stroke-width="0.8"/></svg>
<svg style="left:15.90px;top:459.40px" width="9.20" height="9.20" viewBox="-6 -6 12 12"><circle r="5.8" fill="url(#gR)"/><path d="M-2.3 -2.3L2.3 2.3M2.3 -2.3L-2.3 2.3" fill="none" stroke="#fff" stroke-linecap="round" stroke-width="1.5"/></svg>
<span class="t" style="left:29.00px;top:459.10px;font-size:8.0px;color:#2e2e2e;transform:scaleX(0.9946);">Delete</span>
<svg style="left:83.00px;top:461.00px" width="8.00" height="6.20" viewBox="0 0 20 16" preserveAspectRatio="none"><path d="M0 1.2Q0 0 1.2 0H7L9 2.4H0Z" fill="#f2b52c"/><path d="M0 2.2H19Q20 2.2 20 3.2V15Q20 16 19 16H1Q0 16 0 15Z" fill="url(#gF)"/></svg>
<span class="t" style="left:96.00px;top:459.10px;font-size:8.0px;color:#2e2e2e;transform:scaleX(0.9853);">My New Folder</span>
<svg style="left:457.00px;top:461.00px" width="7.60" height="6.20" viewBox="0 0 20 16" preserveAspectRatio="none"><path d="M0 1.2Q0 0 1.2 0H7L9 2.4H0Z" fill="#f2b52c"/><path d="M0 2.2H19Q20 2.2 20 3.2V15Q20 16 19 16H1Q0 16 0 15Z" fill="url(#gF)"/></svg>
<span class="t" style="left:469.00px;top:459.10px;font-size:8.0px;color:#2e2e2e;transform:scaleX(1.1698);">/</span>
<div style="position:absolute;left:2px;top:514.6px;width:1022px;height:13.799999999999955px;background:linear-gradient(#cfe0f8 0,#c2d8f5 45%,#b5cff2 55%,#c6dbf7 100%);border-bottom:1px solid #d9e7fb;box-sizing:border-box;"></div>
<span class="t" style="left:5.00px;top:516.90px;font-size:8.0px;color:#2a4a82;transform:scaleX(0.8432);">Ready</span>
<div style="position:absolute;left:617px;top:516px;width:1px;height:11px;background:#a9c3e8;"></div>
<div style="position:absolute;left:618px;top:516px;width:1px;height:11px;background:#deebfb;"></div>
<div style="position:absolute;left:781px;top:516px;width:1px;height:11px;background:#a9c3e8;"></div>
<div style="position:absolute;left:782px;top:516px;width:1px;height:11px;background:#deebfb;"></div>
<div style="position:absolute;left:831px;top:516px;width:1px;height:11px;background:#a9c3e8;"></div>
<div style="position:absolute;left:832px;top:516px;width:1px;height:11px;background:#deebfb;"></div>
<div style="position:absolute;left:883px;top:516px;width:1px;height:11px;background:#a9c3e8;"></div>
<div style="position:absolute;left:884px;top:516px;width:1px;height:11px;background:#deebfb;"></div>
<div style="position:absolute;left:953px;top:516px;width:1px;height:11px;background:#a9c3e8;"></div>
<div style="position:absolute;left:954px;top:516px;width:1px;height:11px;background:#deebfb;"></div>
<span class="t" style="left:624.00px;top:516.70px;font-size:8.0px;color:#2a4a82;transform:scaleX(0.9369);">On Queue Completion: Do nothing</span>
<span class="t" style="left:788.00px;top:516.70px;font-size:8.0px;color:#2a4a82;transform:scaleX(0.8962);">Items: 0</span>
<span class="t" style="left:839.00px;top:516.70px;font-size:8.0px;color:#2a4a82;transform:scaleX(0.9122);">Total: 0 bytes</span>
<div style="position:absolute;left:890px;top:516px;width:63px;height:12px;overflow:hidden;">
<span class="t" style="left:0.00px;top:0.70px;font-size:8.0px;color:#2a4a82;transform:scaleX(0.9328);">Transferred: 0 bytes</span>
</div>
<span class="t" style="left:960.00px;top:516.70px;font-size:8.0px;color:#2a4a82;transform:scaleX(0.8659);">Speed: 0,00 Bytes/s</span>
<div style="position:absolute;left:3px;top:529.5px;width:63px;height:12.0px;background:linear-gradient(#e6effb,#d8e6f9);border-radius:1px;"></div>
<svg style="left:3.00px;top:530.40px" width="9.20" height="9.20" viewBox="-6 -6 12 12"><circle r="5.8" fill="url(#gB)"/><path d="M-3.4 2.6V0.4M-1.4 2.6V-0.8M0.6 2.6V-1.8M2.6 2.6V-0.4" stroke="#fff" stroke-width="1.2"/><path d="M-1 -3.4L1.6 -4.4L3.6 -2.6" fill="none" stroke="#f4d03c" stroke-width="1.2"/></svg>
<span class="t" style="left:15.00px;top:530.90px;font-size:8.0px;color:#2a4a82;transform:scaleX(0.8882);">Transfer Queue</span>
<svg style="left:70.40px;top:530.40px" width="9.20" height="9.20" viewBox="-6 -6 12 12"><circle r="5.8" fill="url(#gG)"/><rect x="-2.2" y="-3" width="4.4" height="6" rx="0.4" fill="#d8efb0"/><text x="-1.5" y="2.2" font-size="5" font-weight="bold" fill="#e2a21c" font-family="Liberation Sans,sans-serif">?</text></svg>
<span class="t" style="left:82.50px;top:530.90px;font-size:8.0px;color:#2a4a82;transform:scaleX(0.8918);">Open Files</span>
</body></html>
